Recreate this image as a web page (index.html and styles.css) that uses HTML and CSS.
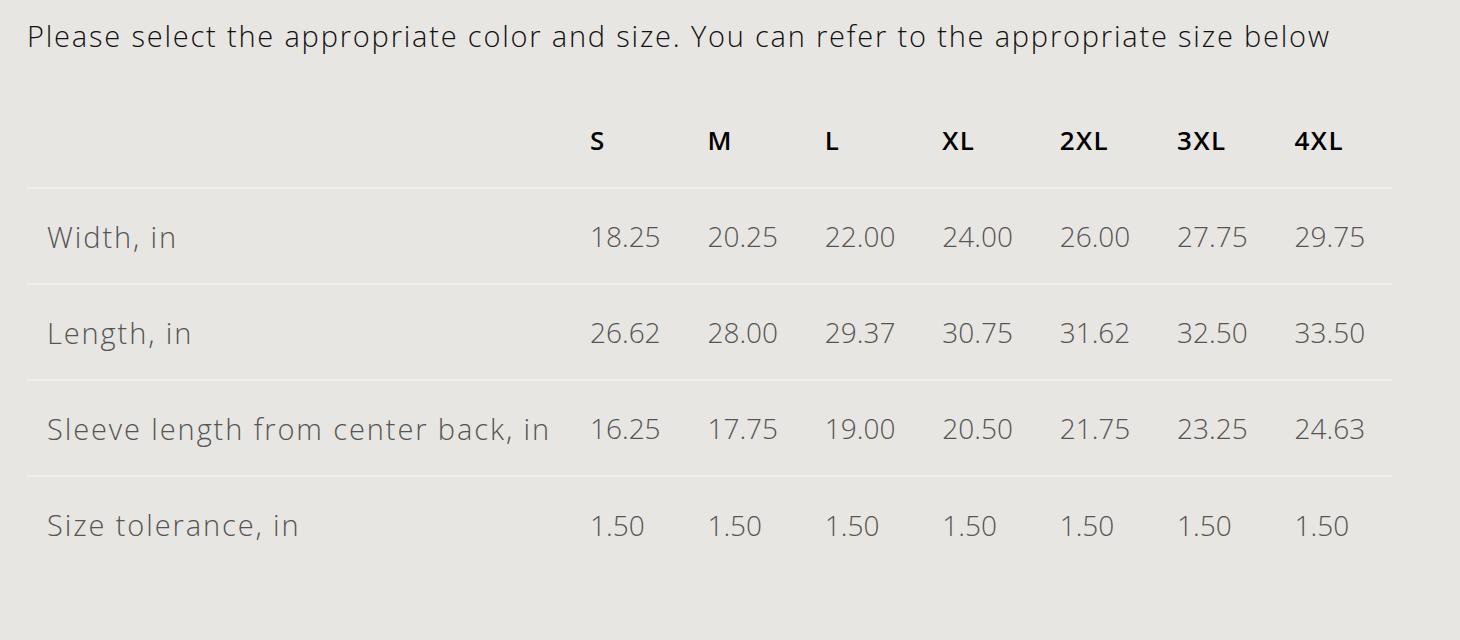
FILE: index.html
```html
<!DOCTYPE html>
<html lang="en">
<head>
<meta charset="utf-8">
<title>Size chart</title>
<link rel="stylesheet" href="styles.css">
</head>
<body>
<div class="page">
  <p class="intro">Please select the appropriate color and size. You can refer to the appropriate size below</p>
  <table class="chart">
    <colgroup>
      <col class="col-label">
      <col><col><col><col><col><col><col>
    </colgroup>
    <thead>
      <tr><th></th><th>S</th><th>M</th><th>L</th><th>XL</th><th>2XL</th><th>3XL</th><th>4XL</th></tr>
    </thead>
    <tbody>
      <tr><td class="label">Width, in</td><td>18.25</td><td>20.25</td><td>22.00</td><td>24.00</td><td>26.00</td><td>27.75</td><td>29.75</td></tr>
      <tr><td class="label">Length, in</td><td>26.62</td><td>28.00</td><td>29.37</td><td>30.75</td><td>31.62</td><td>32.50</td><td>33.50</td></tr>
      <tr><td class="label">Sleeve length from center back, in</td><td>16.25</td><td>17.75</td><td>19.00</td><td>20.50</td><td>21.75</td><td>23.25</td><td>24.63</td></tr>
      <tr><td class="label">Size tolerance, in</td><td>1.50</td><td>1.50</td><td>1.50</td><td>1.50</td><td>1.50</td><td>1.50</td><td>1.50</td></tr>
    </tbody>
  </table>
</div>
</body>
</html>
```

FILE: styles.css
```css
html, body {
  margin: 0;
  padding: 0;
  background: #e8e6e2;
}
.page {
  padding: 15px 27px 0 27px;
  font-family: "Open Sans", "Liberation Sans", sans-serif;
  font-weight: 300;
}
.intro {
  margin: 0;
  font-size: 29px;
  line-height: 42px;
  letter-spacing: 1.8px;
  color: #111;
  white-space: nowrap;
}
.chart {
  margin-top: 35px;
  width: 1365px;
  border-collapse: collapse;
  table-layout: fixed;
}
.col-label {
  width: 543px;
}
.chart th,
.chart td {
  height: 96px;
  padding: 0 20px;
  text-align: left;
  vertical-align: middle;
  white-space: nowrap;
  box-sizing: border-box;
}
.chart th {
  font-size: 26px;
  font-weight: 600;
  letter-spacing: 1.4px;
  color: #000;
}
.chart td {
  font-size: 28px;
  color: #555;
}
.chart td.label {
  font-size: 29px;
  letter-spacing: 1.9px;
}
.chart thead tr,
.chart tbody tr:not(:last-child) {
  border-bottom: 2px solid #f0eeeb;
}
```
